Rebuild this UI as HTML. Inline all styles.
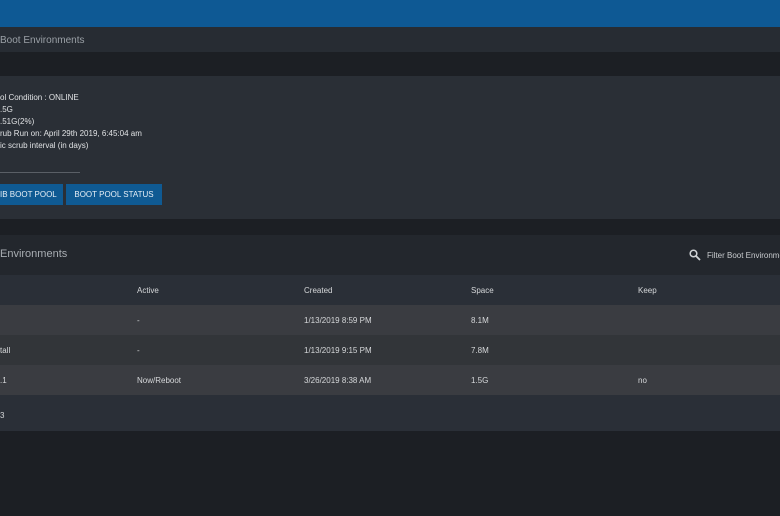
<!DOCTYPE html>
<html><head><meta charset="utf-8"><style>
*{margin:0;padding:0;box-sizing:border-box}
body{width:780px;height:516px;overflow:hidden;background:#1c1f24;font-family:"Liberation Sans",sans-serif;color:#d6d8da;position:relative}
.a{position:absolute;white-space:nowrap}
.f8{font-size:8px}
</style></head><body>
<div class="a" style="left:0;top:0;width:780px;height:27px;background:#0e5994"></div>
<div class="a" style="left:0;top:27px;width:780px;height:25px;background:#272c33"></div>
<div class="a" style="left:0;top:35px;font-size:10px;color:#9aa0a6">Boot Environments</div>
<div class="a" style="left:0;top:76px;width:780px;height:143px;background:#2a2f36"></div>
<div class="a f8" style="left:0;top:92px;line-height:12px;color:#e0e2e4">ol Condition : ONLINE<br>.5G<br>.51G(2%)<br>rub Run on: April 29th 2019, 6:45:04 am<br>ic scrub interval (in days)</div>
<div class="a" style="left:0;top:172px;width:80px;height:1px;background:#5a5f66"></div>
<div class="a f8" style="left:0;top:184px;width:63px;height:21px;background:#0f5a93;color:#e6eef5;line-height:21px;text-align:right;padding-right:9px">IB BOOT POOL</div>
<div class="a f8" style="left:66px;top:184px;width:96px;height:21px;background:#0f5a93;color:#e6eef5;line-height:21px;text-align:center">BOOT POOL STATUS</div>
<div class="a" style="left:0;top:235px;width:780px;height:40px;background:#23272d"></div>
<div class="a" style="left:0;top:248px;font-size:11px;color:#a8adb2">Environments</div>
<svg class="a" style="left:689px;top:249px" width="12" height="12" viewBox="0 0 12 12"><circle cx="4.5" cy="4.5" r="3.3" fill="none" stroke="#cfd2d5" stroke-width="1.5"/><path d="M7 7L11 11" stroke="#cfd2d5" stroke-width="1.8"/></svg>
<div class="a f8" style="left:707px;top:251px;color:#c8cbce">Filter Boot Environments</div>
<div class="a" style="left:0;top:275px;width:780px;height:30px;background:#2a2f37"></div>
<div class="a f8" style="left:137px;top:286px">Active</div>
<div class="a f8" style="left:304px;top:286px">Created</div>
<div class="a f8" style="left:471px;top:286px">Space</div>
<div class="a f8" style="left:638px;top:286px">Keep</div>
<div class="a" style="left:0;top:305px;width:780px;height:30px;background:#3a3c41"></div>
<div class="a" style="left:0;top:335px;width:780px;height:30px;background:#323539"></div>
<div class="a" style="left:0;top:365px;width:780px;height:30px;background:#3a3c41"></div>
<div class="a f8" style="left:137px;top:316px">-</div><div class="a f8" style="left:304px;top:316px">1/13/2019 8:59 PM</div><div class="a f8" style="left:471px;top:316px">8.1M</div>
<div class="a f8" style="left:0;top:346px">tall</div><div class="a f8" style="left:137px;top:346px">-</div><div class="a f8" style="left:304px;top:346px">1/13/2019 9:15 PM</div><div class="a f8" style="left:471px;top:346px">7.8M</div>
<div class="a f8" style="left:0;top:376px">.1</div><div class="a f8" style="left:137px;top:376px">Now/Reboot</div><div class="a f8" style="left:304px;top:376px">3/26/2019 8:38 AM</div><div class="a f8" style="left:471px;top:376px">1.5G</div><div class="a f8" style="left:638px;top:376px">no</div>
<div class="a" style="left:0;top:395px;width:780px;height:36px;background:#2a2f37"></div>
<div class="a f8" style="left:0;top:411px">3</div>
</body></html>
